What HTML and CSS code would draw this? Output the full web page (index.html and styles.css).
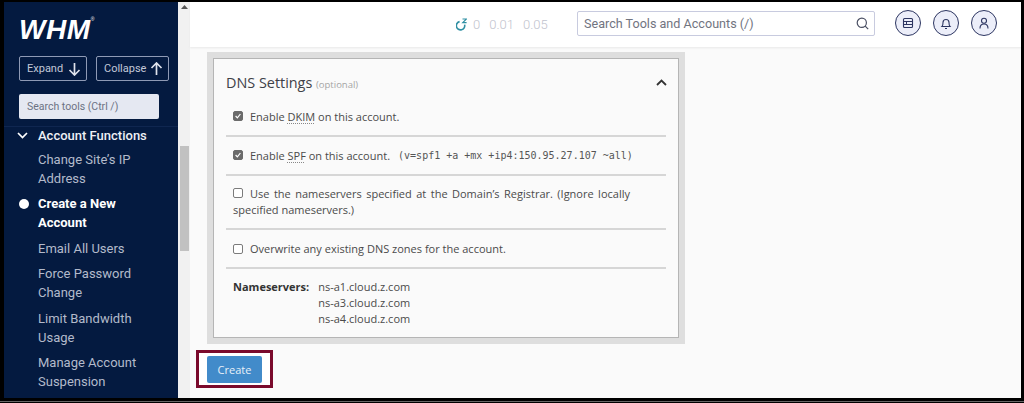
FILE: index.html
```html
<!DOCTYPE html>
<html lang="en">
<head>
<meta charset="utf-8">
<title>WHM - Create a New Account</title>
<link rel="stylesheet" href="styles.css">
</head>
<body>
<div class="window">
  <aside class="sidebar">
    <div class="logo">WHM<sup class="reg">®</sup></div>
    <div class="expanders">
      <button class="ghost expand">Expand
        <svg width="13" height="14" viewBox="0 0 13 14"><path d="M6.5 1v12M1.5 8l5 5 5-5" fill="none" stroke="currentColor" stroke-width="1.7"/></svg>
      </button>
      <button class="ghost collapse">Collapse
        <svg width="13" height="14" viewBox="0 0 13 14"><path d="M6.5 13V1M1.5 6l5-5 5 5" fill="none" stroke="currentColor" stroke-width="1.7"/></svg>
      </button>
    </div>
    <div class="tool-search">Search tools (Ctrl /)</div>
    <nav class="nav">
      <div class="nav-head">
        <svg class="nav-chevron" width="11" height="7" viewBox="0 0 11 7"><path d="M1 1l4.5 4.5L10 1" fill="none" stroke="#fff" stroke-width="1.7"/></svg>
        Account Functions
      </div>
      <ul class="nav-list">
        <li>Change Site’s IP Address</li>
        <li class="current">Create a New Account</li>
        <li>Email All Users</li>
        <li>Force Password Change</li>
        <li>Limit Bandwidth Usage</li>
        <li>Manage Account Suspension</li>
        <li>Manage Demo Mode</li>
      </ul>
    </nav>
  </aside>
  <div class="scrollbar">
    <svg class="scroll-up" width="7" height="4" viewBox="0 0 7 4"><path d="M3.5 0L7 4H0z" fill="#555"/></svg>
    <div class="thumb"></div>
  </div>
  <main class="main">
    <header class="topbar">
      <div class="load">
        <svg width="11" height="13" viewBox="0 0 11 13"><path d="M3.6 3.6A4.2 4.2 0 1 0 8.6 6.6" fill="none" stroke="#2f8fa3" stroke-width="1.6"/><path d="M6.5 1h4L6.8 4.6h3.8" fill="none" stroke="#2f8fa3" stroke-width="1.2"/></svg>
        <span>0</span><span>0.01</span><span>0.05</span>
      </div>
      <div class="global-search">
        <span>Search Tools and Accounts (/)</span>
        <svg width="13" height="13" viewBox="0 0 13 13"><circle cx="5.8" cy="5.8" r="4.6" fill="none" stroke="#4a4f63" stroke-width="1.2"/><path d="M9.2 9.2l3 3" stroke="#4a4f63" stroke-width="1.2"/></svg>
      </div>
      <div class="circles">
        <div class="circle"><svg width="12" height="12" viewBox="0 0 12 12"><rect x="1.5" y="1.5" width="9" height="9" rx="1" fill="none" stroke="#2c3561" stroke-width="1.1"/><path d="M1.5 4.5h9M1.5 7.5h9M4.5 4.5v3" stroke="#2c3561" stroke-width="1" fill="none"/></svg></div>
        <div class="circle"><svg width="12" height="13" viewBox="0 0 12 13"><path d="M2 9.5c1-1 1-2 1-4a3 3 0 0 1 6 0c0 2 0 3 1 4z" fill="none" stroke="#2c3561" stroke-width="1.1"/><path d="M5 11.5h2" stroke="#2c3561" stroke-width="1.2"/></svg></div>
        <div class="circle"><svg width="12" height="13" viewBox="0 0 12 13"><circle cx="6" cy="3.8" r="2.5" fill="none" stroke="#2c3561" stroke-width="1.1"/><path d="M2 11.5c0-3 1.5-4.5 4-4.5s4 1.5 4 4.5" fill="none" stroke="#2c3561" stroke-width="1.1"/></svg></div>
      </div>
    </header>
    <section class="content">
      <div class="panel-frame">
        <div class="panel">
          <div class="panel-head">
            <h2>DNS Settings <small>(optional)</small></h2>
            <svg width="11" height="7" viewBox="0 0 11 7"><path d="M1 6l4.5-4.5L10 6" fill="none" stroke="#333" stroke-width="1.8"/></svg>
          </div>
          <div class="row row-first">
            <span class="box checked"><svg width="10" height="10" viewBox="0 0 10 10"><path d="M2 5l2.2 2.3L8 2.5" fill="none" stroke="#fff" stroke-width="1.5"/></svg></span>
            <span class="label">Enable <abbr>DKIM</abbr> on this account.</span>
          </div>
          <div class="row row-spf">
            <span class="box checked"><svg width="10" height="10" viewBox="0 0 10 10"><path d="M2 5l2.2 2.3L8 2.5" fill="none" stroke="#fff" stroke-width="1.5"/></svg></span>
            <span class="label">Enable <abbr>SPF</abbr> on this account.</span>
            <code>(v=spf1 +a +mx +ip4:150.95.27.107 ~all)</code>
          </div>
          <div class="row row-wrap">
            <span class="box inline"></span><span class="label">Use the nameservers specified at the Domain’s Registrar. (Ignore locally specified nameservers.)</span>
          </div>
          <div class="row row-over">
            <span class="box"></span>
            <span class="label">Overwrite any existing DNS zones for the account.</span>
          </div>
          <div class="ns">
            <strong>Nameservers:</strong>
            <div class="ns-list">
              <div>ns-a1.cloud.z.com</div>
              <div>ns-a3.cloud.z.com</div>
              <div>ns-a4.cloud.z.com</div>
            </div>
          </div>
        </div>
      </div>
      <div class="highlight"><button class="create">Create</button></div>
    </section>
  </main>
</div>
<div class="edge"></div>
</body>
</html>
```

FILE: styles.css
```css
* { box-sizing: border-box; }
html, body { margin: 0; height: 403px; overflow: hidden; background: #000; }
body { padding: 2px 3px 0 4px; font-family: "Open Sans", sans-serif; color: #4a4a4a; }

.window { display: flex; height: 396px; background: #fafafa; overflow: hidden; }
.edge { height: 1px; margin: 3px -3px 0 -4px; background: #666; }

.sidebar { width: 174px; flex: none; background: #041a40; font-family: Roboto, sans-serif; overflow: hidden; }
.logo { margin: 14px 0 0 15px; height: 28px; font: italic 700 28px/28px "Liberation Sans", sans-serif; color: #fff; letter-spacing: 0.6px; }
.reg { font-size: 5px; line-height: 0; vertical-align: 18px; font-style: normal; font-weight: 400; }
.expanders { display: flex; gap: 9px; margin: 12px 0 0 15px; }
.ghost { display: flex; align-items: center; justify-content: space-between; height: 25px; padding: 0 5px 0 7px; border: 1px solid #8f9ab5; border-radius: 2px; background: transparent; color: #c2c8d8; font: 400 11px Roboto, sans-serif; }
.ghost svg { color: #dfe3ec; }
.expand { width: 68px; }
.collapse { width: 73px; }
.tool-search { margin: 13px 0 0 15px; width: 140px; height: 25px; padding-left: 8px; border-radius: 2px; background: #e5e8f2; color: #6c7283; font-size: 10.5px; line-height: 25px; }
.nav { margin-top: 7px; border-top: 1px solid #0f2650; padding-top: 1px; }
.nav-head { display: flex; align-items: center; height: 16px; margin-top: -1px; padding-left: 13px; color: #eef0f5; font-size: 13px; font-weight: 500; }
.nav-chevron { margin-right: 10px; }
.nav-list { list-style: none; margin: 6.5px 0 0; padding: 0 20px 0 34px; color: #b3bacb; font-size: 13px; line-height: 19.3px; }
.nav-list li { position: relative; margin-bottom: 6px; }
.current { color: #fff; font-weight: 700; }
.current::before { content: ""; position: absolute; left: -19px; top: 5px; width: 10px; height: 10px; border-radius: 50%; background: #fff; }

.scrollbar { width: 12px; flex: none; padding: 3px 0 0 2px; background: #f1f1f1; }
.scroll-up { display: block; margin-left: 1px; }
.thumb { width: 9px; height: 105px; margin-top: 137px; background: #c1c1c1; }

.main { flex: 1; display: flex; flex-direction: column; min-width: 0; }
.topbar { flex: none; display: flex; align-items: center; height: 45px; padding-left: 266px; background: #fff; box-shadow: 0 1px 2px #e8e8e8; font-family: Roboto, sans-serif; }
.load { display: flex; align-items: center; gap: 6px; width: 121px; color: #bfc3ce; font-size: 13px; font-weight: 300; }
.load span + span { margin-left: 3px; }
.global-search { display: flex; align-items: center; justify-content: space-between; width: 298px; height: 25px; margin-top: -3px; padding: 0 5px 0 6px; border: 1px solid #c8cbdf; border-radius: 2px; color: #71747f; font-size: 12.6px; }
.circles { display: flex; gap: 12px; margin: -3px 0 0 20px; }
.circle { display: flex; align-items: center; justify-content: center; width: 26px; height: 26px; border: 1px solid #2c3561; border-radius: 50%; background: #eceef9; }

.content { flex: 1; padding: 5px 0 0 6px; }
.panel-frame { width: 478px; height: 292px; margin-left: 11px; padding: 6px; background: #dedede; }
.panel { height: 280px; padding: 0 12px 0 12px; border: 1px solid #b5b5b5; background: #fafafa; }
.panel-head { display: flex; align-items: center; justify-content: space-between; height: 50px; padding-bottom: 3px; }
.panel-head svg { margin-right: -1px; }
h2 { margin: 0; font-size: 14.4px; font-weight: 400; color: #3e4148; }
h2 small { font-size: 9.5px; color: #a5a5a5; }
.row { display: flex; align-items: center; padding-left: 7px; font-size: 11px; border-bottom: 2px solid #d6d6d6; }
.row-first { height: 28px; padding-bottom: 12px; }
.row-spf { height: 39px; padding-bottom: 1px; }
.row-wrap { display: block; height: 54px; padding-top: 10px; line-height: 16px; }
.row-wrap::first-line { word-spacing: 1.6px; }
.row-over { height: 39px; }
.box { flex: none; display: inline-flex; align-items: center; justify-content: center; width: 10px; height: 10px; margin-right: 7px; border: 1px solid #7b7b7b; border-radius: 2px; background: #fff; }
.box.checked { background: #6b6b6b; border-color: #6b6b6b; }
abbr { text-decoration: underline dotted #888; text-underline-offset: 2px; }
code { margin-left: 8px; font: 10px "DejaVu Sans Mono", monospace; color: #555; }
.ns { display: flex; gap: 9px; padding: 10px 0 0 7px; font-size: 11px; line-height: 16px; }
.ns strong { color: #333; }

.highlight { display: inline-block; margin-top: 6px; padding: 3px 8px 2px; border: 3px solid #7a0a2c; background: #fff; }
.create { display: block; width: 55px; height: 27px; border: 0; border-radius: 2px; background: #428bca; color: #e8f0f8; font: 500 11px "Open Sans", sans-serif; }
```
